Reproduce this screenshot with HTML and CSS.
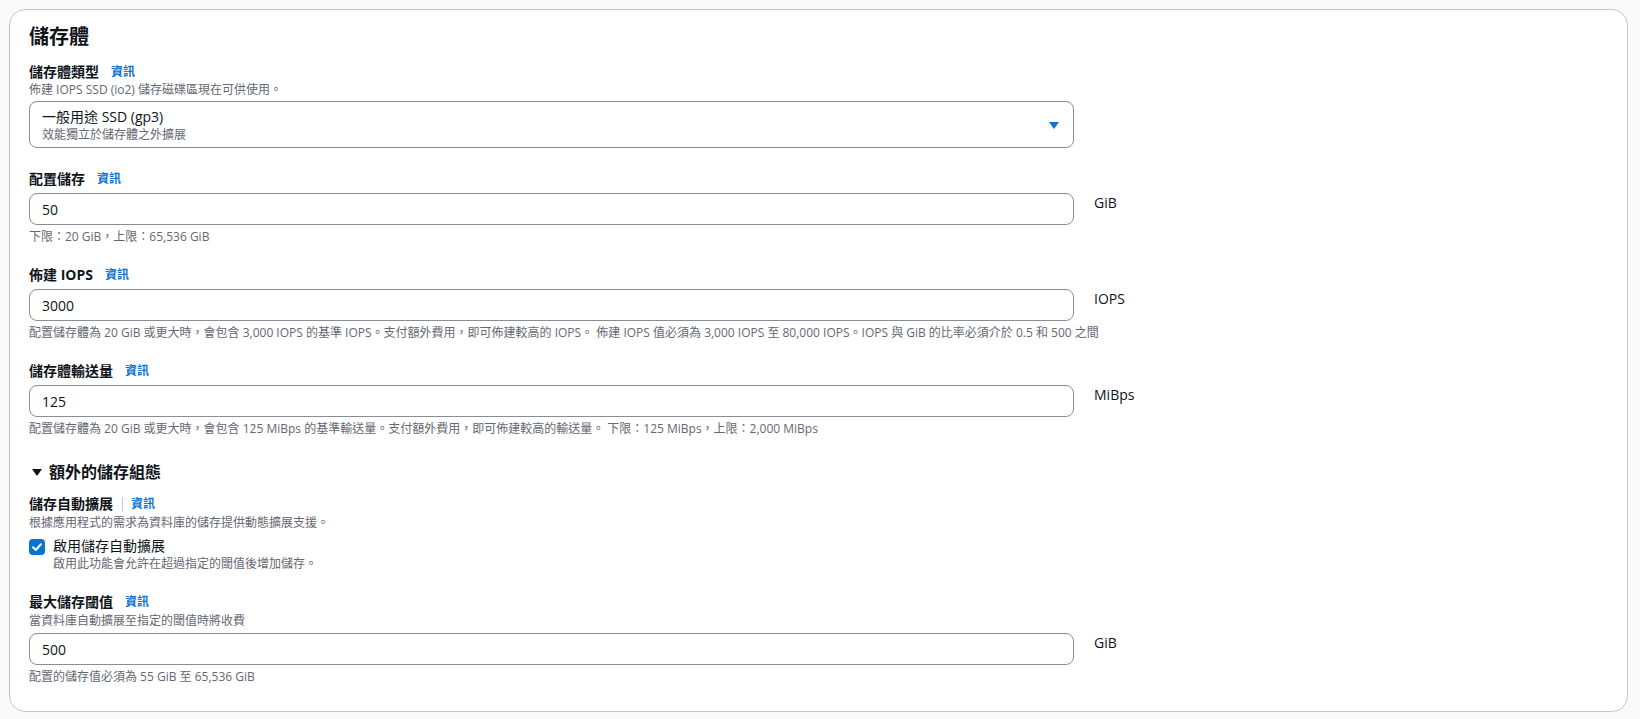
FILE: index.html
```html
<!DOCTYPE html>
<html lang="zh-Hant">
<head>
  <meta charset="UTF-8">
  <meta name="viewport" content="width=device-width, initial-scale=1.0">
  <title>儲存體</title>
  <link rel="stylesheet" href="styles.css">
</head>
<body>
  <div class="panel">
    <h2 class="panel-title">儲存體</h2>

    <!-- 儲存體類型 -->
    <div class="field field-first">
      <div class="field-label"><span>儲存體類型</span><a class="info" href="#">資訊</a></div>
      <div class="field-desc field-desc-flush">佈建 IOPS SSD (io2) 儲存磁碟區現在可供使用。</div>
      <div class="field-row field-row-select">
        <div class="select">
          <div class="select-text">
            <div class="select-value">一般用途 SSD (gp3)</div>
            <div class="select-sub">效能獨立於儲存體之外擴展</div>
          </div>
          <svg class="caret" width="10" height="7" viewBox="0 0 10 7"><path d="M0 0H10L5 7Z" fill="#0972d3"/></svg>
        </div>
      </div>
    </div>

    <!-- 配置儲存 -->
    <div class="field field-after-select">
      <div class="field-label"><span>配置儲存</span><a class="info" href="#">資訊</a></div>
      <div class="field-row">
        <input class="text-input" type="text" value="50">
        <span class="unit">GiB</span>
      </div>
      <div class="field-help">下限：20 GiB，上限：65,536 GiB</div>
    </div>

    <!-- 佈建 IOPS -->
    <div class="field">
      <div class="field-label"><span>佈建 IOPS</span><a class="info" href="#">資訊</a></div>
      <div class="field-row">
        <input class="text-input" type="text" value="3000">
        <span class="unit">IOPS</span>
      </div>
      <div class="field-help">配置儲存體為 20 GiB 或更大時，會包含 3,000 IOPS 的基準 IOPS。支付額外費用，即可佈建較高的 IOPS。 佈建 IOPS 值必須為 3,000 IOPS 至 80,000 IOPS。IOPS 與 GiB 的比率必須介於 0.5 和 500 之間</div>
    </div>

    <!-- 儲存體輸送量 -->
    <div class="field">
      <div class="field-label"><span>儲存體輸送量</span><a class="info" href="#">資訊</a></div>
      <div class="field-row">
        <input class="text-input" type="text" value="125">
        <span class="unit">MiBps</span>
      </div>
      <div class="field-help">配置儲存體為 20 GiB 或更大時，會包含 125 MiBps 的基準輸送量。支付額外費用，即可佈建較高的輸送量。 下限：125 MiBps，上限：2,000 MiBps</div>
    </div>

    <!-- 額外的儲存組態 -->
    <div class="expander">
      <svg class="expander-icon" width="10" height="7" viewBox="0 0 10 7"><path d="M0 0H10L5 7Z" fill="#0f141a"/></svg>
      <span>額外的儲存組態</span>
    </div>

    <div class="field field-in-expander">
      <div class="field-label"><span>儲存自動擴展</span><span class="divider"></span><a class="info info-tight" href="#">資訊</a></div>
      <div class="field-desc">根據應用程式的需求為資料庫的儲存提供動態擴展支援。</div>
      <div class="checkbox-row">
        <span class="checkbox">
          <svg width="16" height="16" viewBox="0 0 16 16"><path d="M4 8.3L6.8 11L12 5.2" fill="none" stroke="#fff" stroke-width="2" stroke-linecap="round" stroke-linejoin="round"/></svg>
        </span>
        <div>
          <div class="checkbox-label">啟用儲存自動擴展</div>
          <div class="checkbox-desc">啟用此功能會允許在超過指定的閾值後增加儲存。</div>
        </div>
      </div>
    </div>

    <!-- 最大儲存閾值 -->
    <div class="field">
      <div class="field-label"><span>最大儲存閾值</span><a class="info" href="#">資訊</a></div>
      <div class="field-desc">當資料庫自動擴展至指定的閾值時將收費</div>
      <div class="field-row">
        <input class="text-input" type="text" value="500">
        <span class="unit">GiB</span>
      </div>
      <div class="field-help">配置的儲存值必須為 55 GiB 至 65,536 GiB</div>
    </div>
  </div>
</body>
</html>
```

FILE: styles.css
```css
body {
  margin: 0;
  padding: 9px 12px 9px 9px;
  background-color: #fafafa;
  font-family: "Open Sans", "Noto Sans CJK TC", sans-serif;
  font-size: 14px;
  line-height: 20px;
  color: #0f141a;
}
.panel {
  background-color: #fff;
  border: 1px solid #c6c6cd;
  border-radius: 16px;
  padding: 15px 19px 26px 19px;
}
.panel-title {
  margin: 0;
  font-size: 20px;
  line-height: 24px;
  font-weight: bold;
}
.field {
  margin-top: 20px;
}
.field-first {
  margin-top: 13px;
}
.field-after-select {
  margin-top: 21px;
}
.field-in-expander {
  margin-top: 10px;
}
.field-label {
  display: flex;
  align-items: center;
  font-weight: bold;
  font-size: 14px;
  line-height: 20px;
}
.info {
  margin-left: 12px;
  font-size: 12px;
  font-weight: bold;
  color: #0972d3;
  text-decoration: none;
}
.info-tight {
  margin-left: 8px;
}
.divider {
  width: 1px;
  height: 15px;
  margin-left: 9px;
  background-color: #c6c6cd;
}
.field-desc {
  margin-top: 1px;
  font-size: 12px;
  line-height: 16px;
  color: #656871;
}
.field-desc-flush {
  margin-top: 0;
}
.field-row {
  display: flex;
  align-items: flex-start;
  gap: 20px;
  margin-top: 4px;
}
.field-row-select {
  margin-top: 3px;
}
.select {
  width: 1045px;
  box-sizing: border-box;
  display: flex;
  align-items: center;
  justify-content: space-between;
  border: 1px solid #8c8c94;
  border-radius: 8px;
  padding: 5px 14px 4px 12px;
}
.select-value {
  font-size: 14px;
  line-height: 20px;
}
.select-sub {
  font-size: 12px;
  line-height: 16px;
  color: #656871;
}
.text-input {
  width: 1045px;
  height: 32px;
  box-sizing: border-box;
  margin: 0;
  border: 1px solid #8c8c94;
  border-radius: 8px;
  padding: 0 12px;
  font-family: inherit;
  font-size: 14px;
  color: #0f141a;
  background-color: #fff;
  outline: none;
}
.unit {
  font-size: 14px;
  line-height: 20px;
}
.field-help {
  margin-top: 4px;
  font-size: 12px;
  line-height: 16px;
  color: #656871;
}
.expander {
  display: flex;
  align-items: center;
  margin-top: 23px;
  font-size: 16px;
  line-height: 24px;
  font-weight: bold;
}
.expander-icon {
  margin-left: 3px;
  margin-right: 7px;
}
.checkbox-row {
  display: flex;
  align-items: flex-start;
  gap: 8px;
  margin-top: 5px;
}
.checkbox {
  width: 16px;
  height: 16px;
  margin-top: 3px;
  border-radius: 4px;
  background-color: #0972d3;
  display: flex;
}
.checkbox-label {
  font-size: 14px;
  line-height: 20px;
}
.checkbox-desc {
  font-size: 12px;
  line-height: 16px;
  color: #656871;
}
```
